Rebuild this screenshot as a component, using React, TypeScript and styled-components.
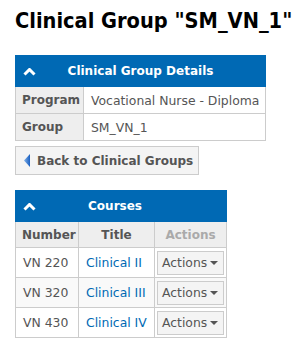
import React from "react";
import styled, { createGlobalStyle } from "styled-components";

const Global = createGlobalStyle`
  html, body { margin: 0; padding: 0; background: #fff; }
  body { font-family: "DejaVu Sans", sans-serif; font-size: 12.4px; color: #555; }
  * { box-sizing: border-box; }
`;

const Page = styled.div`
  padding: 0 15px;
  display: flex;
  flex-direction: column;
  align-items: flex-start;
`;

const Title = styled.h1`
  margin: 8px 0 0;
  height: 47px;
  font-family: "DejaVu Sans Condensed", "DejaVu Sans", sans-serif;
  font-stretch: condensed;
  font-weight: bold;
  font-size: 21.6px;
  line-height: 26px;
  color: #000;
  white-space: nowrap;
`;

const Table = styled.table<{ $w: number }>`
  width: ${(p) => p.$w}px;
  border-collapse: collapse;
  table-layout: fixed;
`;

const Head = styled.th`
  background: #0069b4;
  color: #fff;
  height: 31px;
  padding: 0;
  font-weight: bold;
  font-size: 12px;
  text-align: center;
  position: relative;
  border: 1px solid #0069b4;
`;

const HeadText = styled.span<{ $shift?: number }>`
  margin-right: ${(p) => p.$shift ?? 0}px;
`;

const Chevron = styled.svg`
  position: absolute;
  left: 7px;
  top: 12px;
`;

const LabelCell = styled.th`
  background: #eee;
  border: 1px solid #ccc;
  text-align: left;
  font-weight: bold;
  font-size: 12px;
  color: #555;
  padding: 0 6px;
  height: 27px;
`;

const Cell = styled.td<{ $h?: number }>`
  border: 1px solid #ccc;
  padding: 0 7px;
  height: ${(p) => p.$h ?? 27}px;
  color: #555;
  text-align: left;
  white-space: nowrap;
`;

const ColHead = styled.th<{ $muted?: boolean; $left?: boolean }>`
  background: #eee;
  border: 1px solid #ccc;
  height: 26px;
  font-weight: bold;
  font-size: 12px;
  color: ${(p) => (p.$muted ? "#aaa" : "#555")};
  text-align: ${(p) => (p.$left ? "left" : "center")};
  padding: 0 6px;
`;

const Row = styled.tr<{ $striped?: boolean }>`
  background: ${(p) => (p.$striped ? "#f9f9f9" : "#fff")};
`;

const Link = styled.a`
  color: #0069b4;
  text-decoration: none;
`;

const BackButton = styled.button`
  margin: 5px 0 15px;
  height: 29px;
  display: flex;
  align-items: center;
  gap: 7px;
  padding: 0 5px 0 8px;
  background: #f4f4f4;
  border: 1px solid #ccc;
  border-radius: 0;
  font-family: "DejaVu Sans", sans-serif;
  font-size: 12px;
  font-weight: bold;
  color: #555;
  white-space: nowrap;
`;

const ActionsButton = styled.button`
  height: 24px;
  width: 67px;
  padding: 0 4px;
  display: inline-flex;
  align-items: center;
  gap: 3px;
  background: #f4f4f4;
  border: 1px solid #ccc;
  border-radius: 0;
  font-family: "DejaVu Sans", sans-serif;
  font-size: 12.4px;
  color: #555;
  white-space: nowrap;
`;

const ActionCell = styled.td`
  border: 1px solid #ccc;
  height: 30px;
  padding: 0 2px;
`;

const ChevronUp = () => (
  <Chevron width="13" height="8" viewBox="0 0 13 8">
    <path d="M1.5 6.5 L6.5 1.5 L11.5 6.5" stroke="#fff" strokeWidth="3" fill="none" strokeLinejoin="miter" />
  </Chevron>
);

const courses = [
  { num: "VN 220", title: "Clinical II" },
  { num: "VN 320", title: "Clinical III" },
  { num: "VN 430", title: "Clinical IV" },
];

export default function App() {
  return (
    <>
      <Global />
      <Page>
        <Title>Clinical Group "SM_VN_1"</Title>
        <Table $w={251}>
          <colgroup>
            <col style={{ width: 68 }} />
            <col />
          </colgroup>
          <thead>
            <tr>
              <Head colSpan={2}>
                <ChevronUp />
                <HeadText>Clinical Group Details</HeadText>
              </Head>
            </tr>
          </thead>
          <tbody>
            <tr>
              <LabelCell>Program</LabelCell>
              <Cell>Vocational Nurse - Diploma</Cell>
            </tr>
            <tr>
              <LabelCell>Group</LabelCell>
              <Cell>SM_VN_1</Cell>
            </tr>
          </tbody>
        </Table>
        <BackButton>
          <svg width="6" height="13" viewBox="0 0 6 13">
            <defs>
              <linearGradient id="bg" x1="0" x2="1" y1="0" y2="0">
                <stop offset="0" stopColor="#7fb0e8" />
                <stop offset="1" stopColor="#1a5fc0" />
              </linearGradient>
            </defs>
            <path d="M6 0 L0 6.5 L6 13 Z" fill="url(#bg)" />
          </svg>
          Back to Clinical Groups
        </BackButton>
        <Table $w={212}>
          <colgroup>
            <col style={{ width: 63 }} />
            <col style={{ width: 76 }} />
            <col />
          </colgroup>
          <thead>
            <tr>
              <Head colSpan={3}>
                <ChevronUp />
                <HeadText $shift={12}>Courses</HeadText>
              </Head>
            </tr>
          </thead>
          <tbody>
            <tr>
              <ColHead $left>Number</ColHead>
              <ColHead>Title</ColHead>
              <ColHead $muted>Actions</ColHead>
            </tr>
            {courses.map((c, i) => (
              <Row key={c.num} $striped={i === 1}>
                <Cell $h={30}>{c.num}</Cell>
                <Cell $h={30}>
                  <Link href="#">{c.title}</Link>
                </Cell>
                <ActionCell>
                  <ActionsButton>
                    Actions
                    <svg width="8" height="4" viewBox="0 0 8 4">
                      <path d="M0 0 L8 0 L4 4 Z" fill="#555" />
                    </svg>
                  </ActionsButton>
                </ActionCell>
              </Row>
            ))}
          </tbody>
        </Table>
      </Page>
    </>
  );
}
